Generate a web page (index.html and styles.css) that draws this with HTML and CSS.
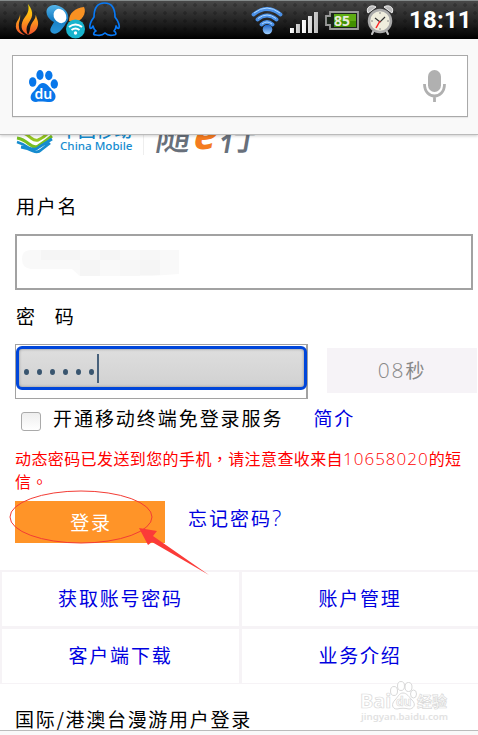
FILE: index.html
```html
<!DOCTYPE html>
<html lang="zh-CN">
<head>
<meta charset="utf-8">
<title>随e行</title>
<link rel="stylesheet" href="styles.css">
</head>
<body>
<header class="status">
  <svg class="left-icons" width="130" height="39" viewBox="0 0 130 39">
    <defs>
      <linearGradient id="fire" x1="0" y1="0" x2="0" y2="1"><stop offset="0" stop-color="#ffe400"/><stop offset=".5" stop-color="#ffa01c"/><stop offset="1" stop-color="#f0502c"/></linearGradient>
      <linearGradient id="wing" x1="0" y1="0" x2="0" y2="1"><stop offset="0" stop-color="#55b5ea"/><stop offset=".5" stop-color="#167dc4"/><stop offset="1" stop-color="#2a97da"/></linearGradient>
    </defs>
    <path fill="url(#fire)" d="M28 4c7 9 4 14 0 20-2 4-2 7 0 11-8-4-8-11-3-18 4-5 4-9 3-13zM20 14c1 6-2 8-1 13 0 4 3 6 6 8-6-1-10-5-9-10 0-4 4-6 4-11zM36 12c-1 5 3 8 2 13-1 6-5 8-10 10 3-5 1-7 4-12 3-4 4-6 4-11z"/>
    <path fill="url(#wing)" d="M47 9c4-7 14-4 19 2 3 4 3 9 0 12-3 6-9 13-14 10-4-3 0-7 2-11-5-2-9-8-7-13z"/>
    <ellipse cx="60" cy="16" rx="6" ry="7.500" transform="rotate(-32 60 16)" fill="#fff"/>
    <path fill="#f79122" d="M69 21c0-8 6-13 15-14 3 6-2 14-10 16z"/>
    <circle cx="75.500" cy="29" r="9.500" fill="#18b4cd"/>
    <g fill="none" stroke="#fff" stroke-width="2"><path d="M69 27q6.500-5 13 0M71.500 30q4-3 8 0"/></g><circle cx="75.500" cy="33" r="1.700" fill="#fff"/>
    <path fill="none" stroke="#0879f5" stroke-width="1.700" stroke-linejoin="round" d="M94 17C94 7 98 3 104.500 3S115 7 115 17c3 4 5 8 4 11-1 1-2 0-3-2 0 3-1 4-2 5 2 1 3 4 0 4-4 1-7 0-9-2-2 2-5 3-9 2-4 0-2-3 0-4-2-1-2-2-3-5-1 2-2 3-3 2-1-4 1-7 4-11z"/>
  </svg>
  <svg class="right-icons" width="160" height="39" viewBox="240 0 160 39">
    <defs>
      <linearGradient id="blue" x1="0" y1="0" x2="0" y2="1"><stop offset="0" stop-color="#1b62c8"/><stop offset="1" stop-color="#a3d2ff"/></linearGradient>
      <linearGradient id="bars" x1="0" y1="0" x2="1" y2="0"><stop offset="0" stop-color="#fff"/><stop offset="1" stop-color="#bbb"/></linearGradient>
    </defs>
    <g fill="none" stroke="#4b91e8" stroke-width="3.800" stroke-linecap="round"><path d="M253.500 14.500q13.500-11 27 0M257.500 19.500q9.500-8 19 0M261.500 24.500q5.500-5 11 0"/></g>
    <g fill="none" stroke="#b0d8ff" stroke-width="1"><path d="M254 13q13-10 26 0M258 18.500q9-7 18 0M262 24q5-4 10 0"/></g>
    <circle cx="267.500" cy="29.500" r="4.800" fill="url(#blue)"/>
    <g fill="url(#bars)"><path d="M290 28h4v5h-4zM296 24h4v9h-4z"/><path d="M302 20h4v13h-4zM308 16h4v17h-4zM314 12h4v21h-4z"/></g>
    <path d="M330 12h28v17h-28v-4h-4v-9h4z" fill="#1a241a" stroke="#9a9a9a" stroke-width="1.800"/>
    <path fill="#5eac12" d="M334 14h22v7h-22z"/><path fill="#419000" d="M334 21h22v6h-22z"/>
    <text x="334" y="25.500" class="battery">85</text>
    <g stroke="#c5c5c5" stroke-width="2" stroke-linecap="round"><path d="m374 30-2 4M386 30l2 4"/></g>
    <path fill="#bcbcbc" stroke="#eee" d="M368 13c-3-6 4-9 8-6zM392 13c3-6-4-9-8-6z"/>
    <circle cx="380" cy="21" r="11" fill="#efeddd" stroke="#aaa" stroke-width="2.500"/>
    <path d="M380 12v2M380 28v2M371 21h2M387 21h2" stroke="#888"/>
    <path d="m375 18 5 4 5-5" fill="none" stroke="#333" stroke-width="1.200"/><path d="m380 21-4 7" stroke="#f22" stroke-width="1.500"/>
  </svg>
  <time class="clock">18:11</time>
</header>
<div class="toolbar">
  <div class="search">
    <svg width="30" height="33" viewBox="28 68 30 33">
      <g fill="#0877ea"><ellipse cx="32.700" cy="81" rx="3.700" ry="4.800"/><ellipse cx="40" cy="74" rx="3.600" ry="5"/><ellipse cx="48.800" cy="74.500" rx="3.700" ry="4.700"/><ellipse cx="54.300" cy="83" rx="3.700" ry="4.700"/><path d="M43 82c4 0 6 4 10 8 5 5 2 11-3 11-4 0-10-1-14 0-6 0-7-6-3-10 4-3 5-9 10-9z"/></g>
      <text x="34.500" y="98" class="du">du</text>
    </svg>
    <svg width="24" height="34" viewBox="422 69 24 34"><rect x="428" y="70" width="13" height="22" rx="6.500" fill="#b0b0b0"/><path d="M424.500 84c0 16 20 16 20 0M434.500 96v6" fill="none" stroke="#b0b0b0" stroke-width="2.800"/></svg>
  </div>
</div>
<main>
  <div class="brand">
    <svg width="38" height="21" viewBox="16 134 38 21">
      <path d="M17 138q6 1 12 6 5 4 9 2 5-3 14-10" fill="none" stroke="#78bf20" stroke-width="3"/>
      <path d="M21 132q6 2 10 6 4 3 7 2 7-3 11-8" fill="none" stroke="#96c622" stroke-width="3"/>
      <path d="M17 142q7 2 12 6 6 3 10-1l13-8M21 147q7 1 12 4 5 2 8-1l9-7" fill="none" stroke="#168ccf" stroke-width="2.800"/>
    </svg>
    <div class="mobile"><span class="cn">中国移动</span><span class="en">China Mobile</span></div>
    <div class="ebrand">随<span class="e">e</span>行</div>
  </div>
  <label class="label user">用户名</label>
  <div class="field"><svg width="160" height="28" viewBox="0 0 160 28"><path fill="#f9f9f9" d="M10 1h148v24l-28 2H59l-8-7H10Q1 19 1 10t9-9z"/><path fill="#f5f5f5" d="M20 1h39v10H20zM79 1h20v10H79zM59 11h20v16H59zM119 11h20v15h-20z"/><path fill="#f7f7f7" d="M99 11h20v16H99zM119 1h20v10h-20z"/></svg></div>
  <label class="label pass">密<span>码</span></label>
  <div class="pass-row">
    <div class="outer"><div class="inner"><i></i><i></i><i></i><i></i><i></i><i></i><b></b></div></div>
    <div class="timer"><span>08</span>秒</div>
  </div>
  <div class="check-row"><span class="check"></span><span class="service">开通移动终端免登录服务</span><a>简介</a></div>
  <p class="notice">动态密码已发送到您的手机<em lang="zh-TW">，</em>请注意查收来自<span>10658020</span>的短<br>信<em lang="zh-TW">。</em></p>
  <div class="login-row"><div class="login">登录</div><a>忘记密码<span>?</span></a>
    <svg class="mark" width="210" height="90" viewBox="5 488 210 90"><ellipse cx="81" cy="517" rx="71" ry="26" fill="none" stroke="#f33c35"/><path fill="#fb3b38" d="m139 528 18 3-4 5 56 39-57-33-4 3z"/></svg>
  </div>
  <nav class="links"><a>获取账号密码</a><a>账户管理</a><a>客户端下载</a><a>业务介绍</a></nav>
  <div class="foreign">国际/港澳台漫游用户登录</div>
</main>
<div class="bottom"></div>
<svg class="watermark" width="94" height="46" viewBox="358 680 94 46">
  <g fill="#fff" stroke="#d9d9d9"><ellipse cx="394" cy="691" rx="3.500" ry="4.500"/><ellipse cx="401" cy="686" rx="3.500" ry="4.500"/><ellipse cx="408.500" cy="687" rx="3.500" ry="4.500"/><ellipse cx="413.500" cy="694" rx="3" ry="4"/><path d="M403 693c4 0 6 4 9 7 5 5 1 9-3 9-4-1-8-1-12 0-5 0-6-5-2-9 3-3 4-7 8-7z"/>
  <text x="360" y="708" class="wm bai">Bai</text><text x="396" y="706" class="wm wdu">du</text><text x="417" y="707" class="wm jing">经验</text></g><text x="361" y="720" class="wm url">jingyan.baidu.com</text>
</svg>
</body>
</html>
```

FILE: styles.css
```css
* { box-sizing: border-box; }
body {
  margin: 0;
  width: 478px;
  height: 735px;
  overflow: hidden;
  position: relative;
  background: #fff;
  color: #000;
  font: 400 19px/24px "Noto Sans CJK SC", sans-serif;
  letter-spacing: 1.8px;
}
svg { display: block; flex: none; }
.status {
  height: 39px;
  display: flex;
  border-top: 1px solid #858b8b;
  background: radial-gradient(circle, #0003 1.5px, transparent 2px) 0 0 / 10px 8px, linear-gradient(#484848, #191919 65%, #000);
}
.status svg { margin-top: -1px; }
.right-icons { margin-left: 110px; }
.clock {
  margin-left: 9px;
  font: 700 24px/38px Roboto, sans-serif;
  letter-spacing: .2px;
  color: #fff;
}
.battery { font: 700 14px "Noto Sans", sans-serif; letter-spacing: 0; fill: #e8eadc; }
.toolbar {
  height: 96px;
  padding: 16px 10px 0 12px;
  background: #f9f9f9;
  border-bottom: 1px solid #bbb;
  box-shadow: 0 1px 3px #0003;
  position: relative;
  z-index: 1;
}
.search {
  height: 62px;
  display: flex;
  justify-content: space-between;
  align-items: center;
  padding: 0 21px 0 15px;
  border: 1px solid #a9a9a9;
  background: #fff;
  box-shadow: 0 1px 1px #0001;
}
.search svg:first-child { margin-top: -2px; }
.du { font: 600 14px "Noto Sans", sans-serif; letter-spacing: 0; fill: #fff; }
.brand { height: 20px; display: flex; align-items: flex-end; padding-left: 16px; }
.mobile {
  display: flex;
  flex-direction: column;
  width: 84px;
  margin-left: 6px;
  border-right: 1px solid #eee;
  color: #168ccf;
}
.cn { font-size: 18px; font-weight: 500; line-height: 18px; letter-spacing: 0; margin-bottom: -1px; }
.en { font: 500 11.6px/18px "Noto Sans", sans-serif; letter-spacing: 0; white-space: nowrap; }
.ebrand {
  margin: 0 0 3px 13px;
  display: flex;
  align-items: flex-end;
  font-size: 35px;
  font-weight: 500;
  line-height: 34px;
  letter-spacing: 0;
  color: #68707b;
  transform: skewX(-10deg);
}
.ebrand .e { padding: 0 3px; font: italic 700 42px/38px "Noto Sans", sans-serif; color: #f47b20; }
.label { display: block; padding-left: 16px; height: 24px; }
.user { margin-top: 39px; }
.field { width: 458px; height: 56px; margin: 16px 0 0 15px; border: 2px solid #a2a2a2; padding: 13px 4px; }
.pass { margin-top: 14px; }
.pass span { margin-left: 18px; }
.pass-row { display: flex; margin: 16px 0 0 15px; height: 55px; }
.outer { width: 293px; height: 55px; border: solid #a2a2a2; border-width: 1px 2px 1px 1px; padding-top: 1px; }
.inner {
  width: 291px;
  height: 44px;
  display: flex;
  align-items: center;
  gap: 8px;
  padding: 8px 6px 0 5px;
  border: 3px solid #0046da;
  border-radius: 6px;
  background: linear-gradient(#dedede, #d1d1d1);
  box-shadow: inset 0 0 3px #888;
}
.inner i { width: 5px; height: 6px; border-radius: 50%; background: #39556f; }
.inner b { width: 2px; height: 29px; margin: -8px 0 0 -5px; background: #48617b; }
.timer {
  width: 150px;
  height: 45px;
  margin: 4px 0 0 19px;
  background: #f6f3f7;
  color: #888;
  text-align: center;
  line-height: 43px;
}
.timer span { font: 300 21px "Open Sans", sans-serif; }
.check-row { display: flex; height: 40px; padding: 7px 0 0 21px; }
.check {
  width: 20px;
  height: 19px;
  margin-top: 6px;
  border: 1.5px solid #aaa;
  border-radius: 3px;
  background: linear-gradient(#eee, #fff);
}
.service { margin-left: 12px; letter-spacing: 1.95px; }
.check-row a { margin-left: 30px; }
a { color: #0000e0; }
.notice {
  margin: 8px 0 0 15px;
  color: #f00;
  font-size: 16px;
  line-height: 23px;
  letter-spacing: .4px;
  white-space: nowrap;
}
.notice em { font-style: normal; font-family: "Noto Sans CJK TC", sans-serif; line-height: 20px; }
.notice span { font: 300 17px/20px "Open Sans", sans-serif; letter-spacing: 1px; }
.login-row { position: relative; display: flex; margin: 8px 0 0 15px; height: 69px; }
.login { width: 150px; height: 42px; padding-left: 2px; background: #ff9428; color: #fff; text-align: center; line-height: 42px; }
.login-row a { margin: 5px 0 0 23px; letter-spacing: 2px; }
.login-row a span { font: 300 22px/20px "Open Sans", sans-serif; }
.mark { position: absolute; left: -10px; top: -13px; }
.links {
  display: grid;
  grid-template-columns: 237px 1fr;
  grid-template-rows: 54px 54px;
  gap: 3px;
  height: 114px;
  padding: 2px 0 1px 2px;
  background: #f6f3f6;
}
.links a { background: #fff; text-align: center; line-height: 51px; }
.foreign { padding: 23px 0 0 15px; white-space: nowrap; letter-spacing: 1.7px; }
.bottom { position: absolute; left: 0; top: 730px; width: 478px; height: 5px; background: #f9f9f9; border-top: 1px solid #bbb; }
.watermark { position: absolute; left: 358px; top: 680px; }
.wm { font-family: "Noto Sans", "Noto Sans CJK SC", sans-serif; letter-spacing: 0; stroke-width: .7px; }
.bai { font-size: 20px; font-weight: 700; }
.wdu { font-size: 12px; font-weight: 700; }
.jing { font-size: 15px; font-weight: 700; }
.url { font-size: 9.7px; font-weight: 600; fill: #e2e2e2; }
```
